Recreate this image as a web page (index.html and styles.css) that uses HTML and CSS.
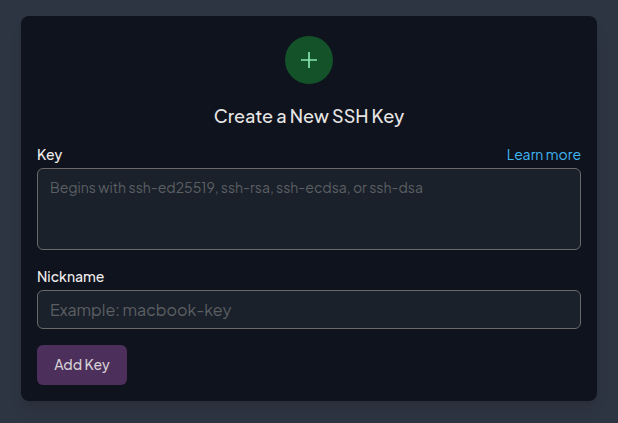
FILE: index.html
```html
<!DOCTYPE html>
<html lang="en">
<head>
<meta charset="utf-8">
<title>Create a New SSH Key</title>
<link rel="stylesheet" href="styles.css">
</head>
<body>
<form class="card">
  <div class="badge">
    <svg width="24" height="24" viewBox="0 0 24 24" fill="none" stroke="currentColor" stroke-width="1.7"><path d="M12 4v16M4 12h16"/></svg>
  </div>
  <h1 class="title">Create a New SSH Key</h1>
  <div class="field-head">
    <label class="label" for="key">Key</label>
    <a class="link" href="#">Learn more</a>
  </div>
  <textarea class="control key-input" id="key" placeholder="Begins with ssh-ed25519, ssh-rsa, ssh-ecdsa, or ssh-dsa"></textarea>
  <div class="field-head">
    <label class="label" for="nickname">Nickname</label>
  </div>
  <input class="control name-input" id="nickname" type="text" placeholder="Example: macbook-key">
  <button class="submit" type="button">Add Key</button>
</form>
</body>
</html>
```
FILE: styles.css
```css
* {
  box-sizing: border-box;
}

body {
  margin: 0;
  height: 423px;
  padding: 16px 21px 22px;
  overflow: hidden;
  background: #2e3542;
  font-family: "Plus Jakarta Sans", Inter, "Liberation Sans", sans-serif;
}

.card {
  display: flex;
  flex-direction: column;
  height: 385px;
  padding: 20px 16px 16px;
  border-radius: 8px;
  background: #0f131e;
  box-shadow: 0 10px 15px -3px rgba(0, 0, 0, 0.1), 0 4px 6px -4px rgba(0, 0, 0, 0.1);
}

.badge {
  display: flex;
  align-items: center;
  justify-content: center;
  align-self: center;
  width: 48px;
  height: 48px;
  border-radius: 50%;
  background: #14532a;
  color: #86e5aa;
}

.title {
  margin: 20px 0 0;
  color: #e7e5e4;
  font-size: 18px;
  font-weight: 500;
  line-height: 24px;
  text-align: center;
}

.field-head {
  display: flex;
  justify-content: space-between;
  height: 20px;
  margin-top: 16px;
  font-size: 14px;
  line-height: 20px;
}

.label {
  color: #f0eeec;
  font-weight: 500;
}

.link {
  color: #40b6f4;
  text-decoration: none;
}

.control {
  display: block;
  width: 100%;
  margin: 4px 0 0;
  padding: 8px 12px;
  border: 1px solid #696969;
  border-radius: 6px;
  outline: 0;
  background: #1a212b;
  color: #e7e5e4;
  font-family: inherit;
}

.control::placeholder {
  color: #5c5f62;
  opacity: 1;
}

.key-input {
  height: 82px;
  flex: none;
  font-size: 14px;
  line-height: 20px;
  resize: none;
}

.name-input {
  height: 39px;
  font-size: 16px;
  line-height: 24px;
}

.submit {
  align-self: flex-start;
  width: 90px;
  height: 40px;
  margin-top: 16px;
  padding: 0 0 2px;
  border: 0;
  border-radius: 6px;
  background: #4c2f5a;
  color: #d4ced4;
  font-family: inherit;
  font-size: 14px;
  font-weight: 500;
  line-height: 20px;
}
```
